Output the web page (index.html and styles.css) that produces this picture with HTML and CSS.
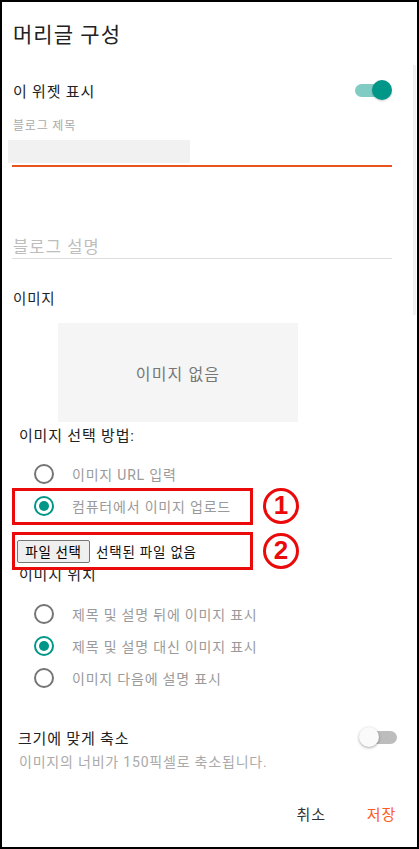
FILE: index.html
```html
<!DOCTYPE html>
<html lang="ko">
<head>
<meta charset="utf-8">
<title>머리글 구성</title>
<link rel="stylesheet" href="styles.css">
</head>
<body>
<div class="frame">
  <div class="title">머리글 구성</div>

  <div class="row widget">
    <span class="label-main">이 위젯 표시</span>
    <span class="toggle on"><span class="track"></span><span class="thumb"></span></span>
  </div>

  <div class="small-label">블로그 제목</div>
  <div class="field"><div class="autofill"></div></div>

  <div class="desc">블로그 설명</div>

  <div class="section">이미지</div>
  <div class="imgbox">이미지 없음</div>

  <div class="method">이미지 선택 방법:</div>
  <div class="radios first">
    <div class="radio"><span class="dot"></span><span class="rtext">이미지 URL 입력</span></div>
    <div class="radio checked"><span class="dot"></span><span class="rtext">컴퓨터에서 이미지 업로드</span></div>
  </div>

  <div class="file-row">
    <button class="file-btn" type="button">파일 선택</button>
    <span class="file-text">선택된 파일 없음</span>
  </div>

  <div class="position">이미지 위치</div>
  <div class="radios second">
    <div class="radio"><span class="dot"></span><span class="rtext">제목 및 설명 뒤에 이미지 표시</span></div>
    <div class="radio checked"><span class="dot"></span><span class="rtext">제목 및 설명 대신 이미지 표시</span></div>
    <div class="radio"><span class="dot"></span><span class="rtext">이미지 다음에 설명 표시</span></div>
  </div>

  <div class="row shrink">
    <span class="label-main">크기에 맞게 축소</span>
    <span class="toggle off"><span class="track"></span><span class="thumb"></span></span>
  </div>
  <div class="hint">이미지의 너비가 150픽셀로 축소됩니다.</div>

  <div class="actions">
    <span class="btn cancel">취소</span>
    <span class="btn save">저장</span>
  </div>

  <div class="scrollbar"></div>
  <div class="mark box1"></div>
  <div class="mark box2"></div>
  <div class="num n1">1</div>
  <div class="num n2">2</div>
</div>
</body>
</html>
```

FILE: styles.css
```css
html, body {
  margin: 0;
  padding: 0;
  background: #fff;
}
body {
  font-family: Roboto, "Noto Sans CJK KR", "Noto Sans", sans-serif;
  color: #222;
}
.frame {
  position: relative;
  width: 419px;
  height: 849px;
  box-sizing: border-box;
  border: 2px solid #000;
  padding: 0 25px 0 11px;
  display: flex;
  flex-direction: column;
  overflow: hidden;
  letter-spacing: 0.05em;
}
.title {
  margin-top: 18px;
  height: 30px;
  line-height: 30px;
  font-size: 21px;
  letter-spacing: 0.05em;
  color: #212121;
}
.row {
  display: flex;
  align-items: center;
  justify-content: space-between;
  height: 24px;
}
.widget { margin-top: 28px; }
.label-main {
  font-size: 15px;
  color: #222;
}
.toggle {
  position: relative;
  display: inline-block;
  width: 37px;
  height: 24px;
}
.toggle .track {
  position: absolute;
  left: 0;
  top: 6px;
  width: 34px;
  height: 13px;
  border-radius: 7px;
}
.toggle .thumb {
  position: absolute;
  top: 2px;
  width: 20px;
  height: 20px;
  border-radius: 50%;
}
.toggle.on .track { background: #80cbc4; }
.toggle.on .thumb { right: 0; background: #009688; box-shadow: 0 1px 2px rgba(0,0,0,0.2); }
.toggle.off { width: 38px; margin-right: -5px; }
.toggle.off .track { left: 5px; width: 33px; background: #bdbdbd; }
.toggle.off .thumb { left: 0; background: #fafafa; box-shadow: 0 1px 3px rgba(0,0,0,0.35); }

.small-label {
  margin-top: 16px;
  height: 16px;
  line-height: 16px;
  font-size: 12px;
  color: #aaa;
}
.field {
  margin-top: 6px;
  margin-left: -1px;
  height: 25px;
  border-bottom: 2px solid #e8541e;
}
.autofill {
  margin-left: -4px;
  width: 182px;
  height: 23px;
  background: #f1f1f1;
}
.desc {
  margin-top: 71px;
  margin-left: -1px;
  padding-left: 1px;
  height: 20px;
  line-height: 20px;
  font-size: 16.5px;
  letter-spacing: 0.07em;
  color: #bdbdbd;
  border-bottom: 1px solid #dedede;
}
.section {
  margin-top: 31px;
  height: 20px;
  line-height: 20px;
  font-size: 14.5px;
  color: #222;
}
.imgbox {
  margin-top: 13px;
  margin-left: 45px;
  width: 240px;
  height: 99px;
  background: #f5f5f5;
  display: flex;
  align-items: center;
  justify-content: center;
  font-size: 16px;
  letter-spacing: 0.07em;
  color: #777;
}
.method {
  margin-top: 5px;
  padding-left: 6px;
  height: 18px;
  line-height: 18px;
  font-size: 15px;
  color: #222;
}
.radios { display: flex; flex-direction: column; }
.radios.first { margin-top: 13px; }
.radios.second { margin-top: 15px; }
.radio {
  display: flex;
  align-items: center;
  height: 32px;
  padding-left: 21px;
}
.dot {
  width: 20px;
  height: 20px;
  box-sizing: border-box;
  border: 2px solid #757575;
  border-radius: 50%;
  display: flex;
  align-items: center;
  justify-content: center;
}
.radio.checked .dot { border-color: #009688; }
.radio.checked .dot::after {
  content: "";
  width: 10px;
  height: 10px;
  border-radius: 50%;
  background: #009688;
}
.rtext {
  margin-left: 18px;
  font-size: 14px;
  color: #9a9a9a;
}
.file-row {
  margin-top: 17px;
  height: 24px;
  display: flex;
  align-items: center;
  padding-left: 4px;
}
.file-btn {
  height: 23px;
  width: 73px;
  padding: 0;
  margin: 0;
  font-family: Roboto, "Noto Sans CJK KR", sans-serif;
  font-size: 13.5px;
  letter-spacing: 0.05em;
  color: #000;
  background: #efefef;
  border: 1px solid #767676;
  border-radius: 2px;
}
.file-text {
  margin-left: 6px;
  font-size: 13.5px;
  color: #111;
}
.position {
  margin-top: 4px;
  padding-left: 6px;
  height: 16px;
  line-height: 16px;
  font-size: 15px;
  color: #222;
}
.shrink { margin-top: 31px; padding-left: 5px; }
.hint {
  margin-top: 5px;
  padding-left: 6px;
  height: 16px;
  line-height: 16px;
  font-size: 14px;
  color: #aaa;
}
.actions {
  margin-top: 35px;
  margin-right: -4px;
  height: 20px;
  display: flex;
  justify-content: flex-end;
  align-items: center;
  gap: 41px;
}
.btn { font-size: 15px; line-height: 20px; }
.cancel { color: #333; }
.save { color: #ff5a1f; }

.scrollbar {
  position: absolute;
  left: 411px;
  top: 63px;
  width: 3px;
  height: 250px;
  background: #f0f0f0;
}
.mark {
  position: absolute;
  left: 10px;
  width: 241px;
  box-sizing: border-box;
  border: 3px solid #ea0a0a;
}
.box1 { top: 486px; height: 37px; }
.box2 { top: 530px; height: 38px; }
.num {
  position: absolute;
  left: 261px;
  width: 36px;
  height: 36px;
  box-sizing: border-box;
  border: 3.5px solid #ea0a0a;
  border-radius: 50%;
  color: #ea0a0a;
  font-family: "Liberation Sans", Arial, sans-serif;
  font-weight: bold;
  font-size: 26px;
  line-height: 29px;
  letter-spacing: 0;
  text-align: center;
}
.n1 { top: 486px; }
.n2 { top: 531px; }
```
